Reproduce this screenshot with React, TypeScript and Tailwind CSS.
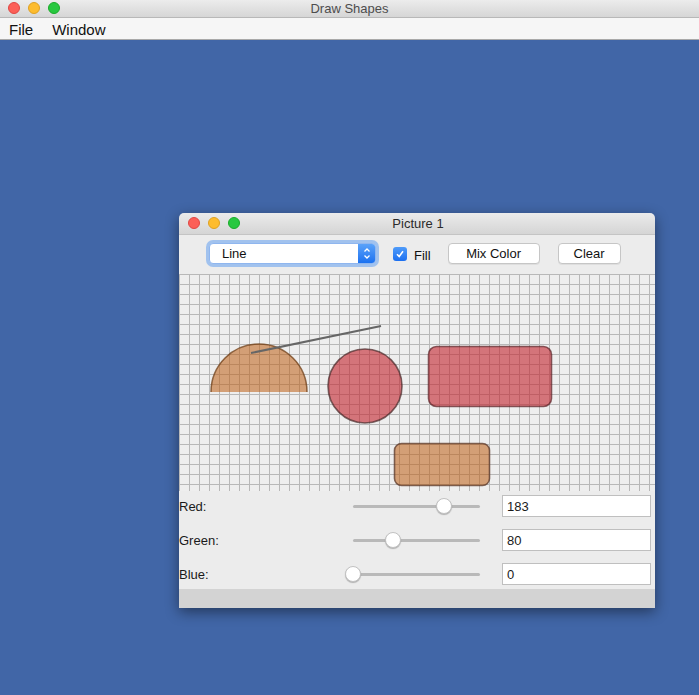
import React from 'react';

const font = { fontFamily: '"Liberation Sans", Arial, sans-serif' };

function Lights() {
  return (
    <div className="flex items-center gap-[8px]">
      <span className="block h-[12px] w-[12px] rounded-full bg-[#fc5f57] border border-[#df4744]" />
      <span className="block h-[12px] w-[12px] rounded-full bg-[#fdbc2e] border border-[#dea123]" />
      <span className="block h-[12px] w-[12px] rounded-full bg-[#28c840] border border-[#1aab29]" />
    </div>
  );
}

function Canvas() {
  const w = 476;
  const h = 217;
  const vlines = [];
  for (let x = 0; x <= w; x += 10) vlines.push(x);
  const hlines = [];
  for (let y = 0; y <= 210; y += 10) hlines.push(y);
  return (
    <svg width={w} height={h} className="block">
      <rect width={w} height={h} fill="#eeeeee" />
      {vlines.map((x) => (
        <line key={'v' + x} x1={x + 0.5} y1={0} x2={x + 0.5} y2={h} stroke="#b8b8b8" strokeWidth={1} />
      ))}
      {hlines.map((y) => (
        <line key={'h' + y} x1={0} y1={y + 0.5} x2={w} y2={y + 0.5} stroke="#b8b8b8" strokeWidth={1} />
      ))}
      {/* half circle */}
      <path d="M32,118 A48,48 0 0 1 128,118 Z" fill="rgba(190,95,20,0.55)" />
      <path d="M32,118 A48,48 0 0 1 128,118" fill="none" stroke="rgba(110,60,20,0.75)" strokeWidth={1.5} />
      {/* circle */}
      <circle cx={186} cy={112} r={37} fill="rgba(195,35,45,0.6)" stroke="rgba(70,40,40,0.7)" strokeWidth={1.6} />
      {/* red rounded rect */}
      <rect x={249.5} y={72.5} width={123} height={60} rx={8} fill="rgba(195,35,45,0.6)" stroke="rgba(90,35,40,0.7)" strokeWidth={1.6} />
      {/* orange rounded rect */}
      <rect x={215.5} y={169.5} width={95} height={42} rx={7} fill="rgba(190,95,20,0.55)" stroke="rgba(90,55,40,0.75)" strokeWidth={1.6} />
      {/* line */}
      <line x1={72} y1={79} x2={202} y2={52} stroke="#666666" strokeWidth={2} />
    </svg>
  );
}

function SliderRow({ label, value }: { label: string; value: number }) {
  const left = (value / 255) * 127;
  return (
    <div className="flex h-[22px] items-center">
      <span className="w-[174px] pt-[1px] text-[13px] text-[#1a1a1a]">{label}</span>
      <div className="relative h-[22px] w-[127px]">
        <div className="absolute left-0 right-0 top-[10px] h-[3px] rounded-full bg-[#b9b9b9]" />
        <div
          className="absolute top-[3px] h-[16px] w-[16px] -ml-[8px] rounded-full border border-[#c2c2c2] bg-white shadow-[0_1px_1px_rgba(0,0,0,0.25)]"
          style={{ left }}
        />
      </div>
      <div className="ml-[22px] flex h-[22px] w-[149px] items-center border border-[#bfbfbf] bg-white px-[4px] pt-[1px] text-[13px] text-[#1a1a1a]">
        {value}
      </div>
    </div>
  );
}

export default function App() {
  return (
    <div className="relative h-[695px] w-[699px] overflow-hidden bg-[#4166a7]" style={font}>
      <div className="relative flex h-[18px] items-center justify-center bg-gradient-to-b from-[#ececec] to-[#d6d6d6] border-b border-[#b8b8b8]">
        <div className="absolute left-[8px] top-[2px]">
          <Lights />
        </div>
        <span className="text-[13px] text-[#4d4d4d]">Draw Shapes</span>
      </div>
      <div className="flex h-[22px] items-center gap-[19px] bg-[#f6f6f6] border-b border-[#a9a9a9] pl-[9px] pt-[3px] text-[15px] text-[#111]">
        <span>File</span>
        <span>Window</span>
      </div>

      <div className="absolute left-[179px] top-[213px] w-[476px] shadow-[0_4px_14px_rgba(0,0,0,0.45)] rounded-t-[5px] overflow-hidden">
        <div className="relative flex h-[22px] items-center justify-center bg-gradient-to-b from-[#ebebeb] to-[#d5d5d5] border-b border-[#c4c4c4]">
          <div className="absolute left-[9px] top-[4px]">
            <Lights />
          </div>
          <span className="pl-[2px] text-[13px] text-[#2b2b2b]">Picture 1</span>
        </div>
        <div className="flex h-[39px] items-start bg-[#ececec] pt-[8px] pl-[30px]">
          <div className="flex h-[21px] w-[167px] rounded-[4px] bg-white shadow-[0_0_0_3px_rgba(100,160,240,0.55)] border border-[#8fb6ef]">
            <span className="flex-1 pl-[12px] text-[13px] leading-[19px] text-[#111]">Line</span>
            <div className="flex w-[17px] flex-col items-center justify-center rounded-r-[3px] bg-gradient-to-b from-[#5aa2f9] to-[#1a71f0]">
              <svg width="8" height="13" viewBox="0 0 8 13">
                <path d="M1.5 4.5 L4 2 L6.5 4.5 M1.5 8.5 L4 11 L6.5 8.5" fill="none" stroke="white" strokeWidth={1.3} />
              </svg>
            </div>
          </div>
          <div className="ml-[17px] mt-[4px] flex h-[14px] w-[14px] items-center justify-center rounded-[3px] bg-gradient-to-b from-[#4f9bf9] to-[#1b6ff0]">
            <svg width="10" height="10" viewBox="0 0 10 10">
              <path d="M2 5.2 L4.2 7.5 L8 2.2" fill="none" stroke="white" strokeWidth={1.6} />
            </svg>
          </div>
          <span className="ml-[7px] mt-[1px] text-[13px] leading-[23px] text-[#111]">Fill</span>
          <div className="ml-[17px] flex h-[21px] w-[92px] items-center justify-center rounded-[4px] border border-[#c6c6c6] bg-white text-[13px] text-[#111] shadow-[0_1px_0_rgba(0,0,0,0.06)]">
            Mix Color
          </div>
          <div className="ml-[18px] flex h-[21px] w-[63px] items-center justify-center rounded-[4px] border border-[#c6c6c6] bg-white text-[13px] text-[#111] shadow-[0_1px_0_rgba(0,0,0,0.06)]">
            Clear
          </div>
        </div>
        <Canvas />
        <div className="flex flex-col gap-[12px] bg-[#ececec] py-[4px]">
          <SliderRow label="Red:" value={183} />
          <SliderRow label="Green:" value={80} />
          <SliderRow label="Blue:" value={0} />
        </div>
        <div className="h-[19px] bg-[#d3d3d3]" />
      </div>
    </div>
  );
}
